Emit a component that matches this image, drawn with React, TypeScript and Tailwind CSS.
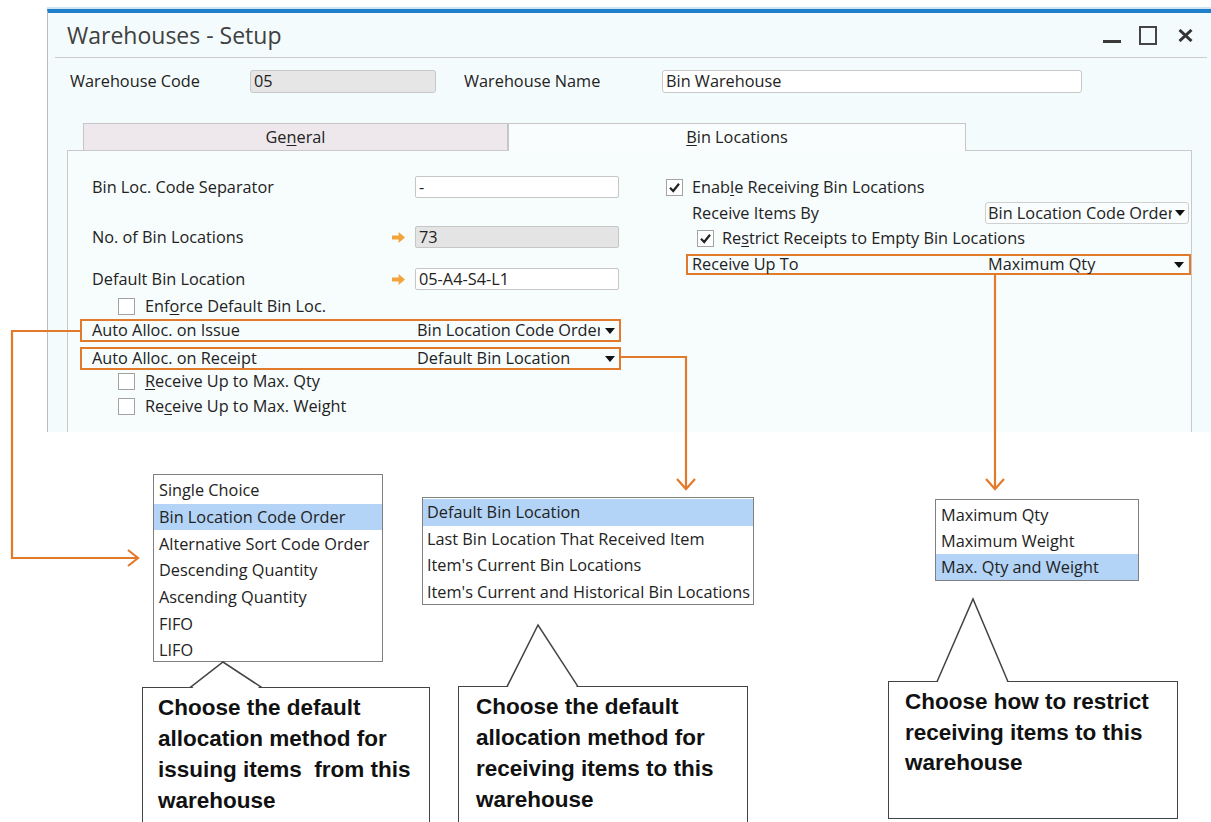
import React from "react";

const ORANGE = "#e27a2c";

function Check({ checked }: { checked?: boolean }) {
  return (
    <span className="w-[17px] h-[17px] border border-[#a3a3a3] bg-white flex items-center justify-center shrink-0">
      {checked && (
        <svg width="13" height="13" viewBox="0 0 13 13">
          <path d="M2 6.8 L5.2 10 L11 2.8" fill="none" stroke="#222" strokeWidth="2.2" />
        </svg>
      )}
    </span>
  );
}

function Arrow() {
  return (
    <svg width="13" height="11" viewBox="0 0 13 11">
      <path d="M0 3.6 H6.6 V0 L13 5.5 L6.6 11 V7.4 H0 Z" fill="#f2a43a" />
    </svg>
  );
}

function Caret() {
  return (
    <svg width="10" height="6" viewBox="0 0 10 6" className="shrink-0">
      <path d="M0 0 H10 L5 6 Z" fill="#111" />
    </svg>
  );
}

function U({ children }: { children: React.ReactNode }) {
  return <span className="underline underline-offset-2">{children}</span>;
}

export default function App() {
  return (
    <div className="relative w-[1211px] h-[822px] bg-white overflow-hidden font-['Open_Sans',sans-serif] text-[16.3px] text-[#222]">
      {/* Window */}
      <div className="pt-[7px] pl-[47px]">
        <div className="h-[2px] bg-[#cfe4f4]" />
        <div className="w-[1164px] h-[423px] border-t-4 border-t-[#1f7fc8] border-l border-l-[#bcbcbc] bg-[#f4fbfc] flex flex-col">
          {/* Title bar */}
          <div className="h-[44px] flex items-center pl-[19px] pr-[18px]">
            <span className="text-[23px] text-[#404040] leading-none">Warehouses - Setup</span>
            <div className="ml-auto flex items-center">
              <div className="w-[18px] h-[3px] bg-[#3a3a3a] mt-[12px]" />
              <div className="ml-[18px] w-[18px] h-[19px] border-2 border-[#444]" />
              <svg className="ml-[21px]" width="15" height="13" viewBox="0 0 15 13">
                <path d="M1.5 1 L13.5 12 M13.5 1 L1.5 12" stroke="#333" strokeWidth="3" />
              </svg>
            </div>
          </div>
          <div className="ml-[7px] mr-[4px] h-px bg-[#cccccc]" />

          {/* Header fields */}
          <div className="mt-[12px] h-[23px] flex items-center pl-[22px]">
            <span className="w-[180px]">Warehouse Code</span>
            <div className="w-[186px] h-[23px] border border-[#c8c8c8] rounded-[3px] bg-[#e6e6e6] flex items-center px-[3px]">05</div>
            <span className="ml-[28px] w-[198px]">Warehouse Name</span>
            <div className="w-[420px] h-[23px] border border-[#c8c8c8] rounded-[3px] bg-white flex items-center px-[3px]">Bin Warehouse</div>
          </div>

          {/* Tabs */}
          <div className="mt-[30px] ml-[35px] h-[27px] flex items-start relative z-10">
            <div className="w-[425px] h-[27px] bg-[#eee8ec] border border-b-0 border-[#c6c6c6] flex items-center justify-center">
              Ge<U>n</U>eral
            </div>
            <div className="w-[458px] h-[28px] bg-[#f9fdfd] border border-b-0 border-[#c6c6c6] flex items-center justify-center">
              <U>B</U>in Locations
            </div>
          </div>

          {/* Panel */}
          <div className="ml-[19px] w-[1125px] flex-1 border-l border-t border-r border-[#c9c9c9] bg-[#f7fcfd] flex">
            {/* Left column */}
            <div className="w-[572px] pl-[24px] pt-[25px] flex flex-col">
              <div className="flex items-center h-[22px]">
                <span className="w-[300px]">Bin Loc. Code Separator</span>
                <span className="w-[23px]" />
                <div className="w-[204px] h-[22px] border border-[#c6c6c6] rounded-[2px] bg-white flex items-center px-[3px]">-</div>
              </div>
              <div className="mt-[28px] flex items-center h-[22px]">
                <span className="w-[300px]">No. of Bin Locations</span>
                <span className="w-[23px] flex items-center"><Arrow /></span>
                <div className="w-[204px] h-[22px] border border-[#c6c6c6] rounded-[2px] bg-[#e4e4e4] flex items-center px-[3px]">73</div>
              </div>
              <div className="mt-[20px] flex items-center h-[22px]">
                <span className="w-[300px]">Default Bin Location</span>
                <span className="w-[23px] flex items-center"><Arrow /></span>
                <div className="w-[204px] h-[22px] border border-[#c6c6c6] rounded-[2px] bg-white flex items-center px-[3px]">05-A4-S4-L1</div>
              </div>
              <div className="mt-[8px] h-[17px] flex items-center pl-[26px]">
                <Check />
                <span className="ml-[10px]">Enf<U>o</U>rce Default Bin Loc.</span>
              </div>
              <div className="mt-[4px] -ml-[12px] w-[541px] h-[23px] border-2 border-[#e27a2c] flex items-center pl-[10px]">
                <span className="w-[323px]">Auto Alloc. on Issue</span>
                <div className="w-[204px] flex items-center justify-between pl-[2px] pr-[4px]">
                  <span className="w-[183px] whitespace-nowrap overflow-hidden">Bin Location Code Order</span>
                  <Caret />
                </div>
              </div>
              <div className="mt-[5px] -ml-[12px] w-[541px] h-[23px] border-2 border-[#e27a2c] flex items-center pl-[10px]">
                <span className="w-[323px]">Auto Alloc. on Receipt</span>
                <div className="w-[204px] flex items-center justify-between pl-[2px] pr-[4px]">
                  <span className="w-[183px] whitespace-nowrap overflow-hidden">Default Bin Location</span>
                  <Caret />
                </div>
              </div>
              <div className="mt-[3px] h-[17px] flex items-center pl-[26px]">
                <Check />
                <span className="ml-[10px]"><U>R</U>eceive Up to Max. Qty</span>
              </div>
              <div className="mt-[8px] h-[17px] flex items-center pl-[26px]">
                <Check />
                <span className="ml-[10px]">Re<U>c</U>eive Up to Max. Weight</span>
              </div>
            </div>

            {/* Right column */}
            <div className="flex-1 pt-[28px] flex flex-col">
              <div className="h-[17px] flex items-center pl-[26px]">
                <Check checked />
                <span className="ml-[9px]">Enab<U>l</U>e Receiving Bin Locations</span>
              </div>
              <div className="mt-[6px] h-[22px] flex items-center pl-[52px]">
                <span className="w-[293px]">Receive Items By</span>
                <div className="w-[204px] h-[22px] border border-[#cfcfcf] rounded-[3px] bg-[#fafdfd] flex items-center justify-between pl-[2px] pr-[3px]">
                  <span className="w-[184px] whitespace-nowrap overflow-hidden">Bin Location Code Order</span>
                  <Caret />
                </div>
              </div>
              <div className="mt-[6px] h-[17px] flex items-center pl-[57px]">
                <Check checked />
                <span className="ml-[8px]">Re<U>s</U>trict Receipts to Empty Bin Locations</span>
              </div>
              <div className="mt-[7px] ml-[46px] w-[505px] h-[21px] border-2 border-[#e27a2c] flex items-center pl-[4px]">
                <span className="w-[294px]">Receive Up To</span>
                <div className="w-[199px] flex items-center justify-between pl-[2px] pr-[1px]">
                  <span>Maximum Qty</span>
                  <Caret />
                </div>
              </div>
            </div>
          </div>
        </div>
      </div>

      {/* Dropdown lists (diagram) */}
      <div className="absolute left-[153px] top-[474px] w-[230px] h-[188px] border-[1.5px] border-[#808080] bg-white pt-[2px]">
        <div className="h-[26.7px] flex items-center pl-[5px]">Single Choice</div>
        <div className="h-[26.7px] flex items-center pl-[5px] bg-[#b3d4f6]">Bin Location Code Order</div>
        <div className="h-[26.7px] flex items-center pl-[5px]">Alternative Sort Code Order</div>
        <div className="h-[26.7px] flex items-center pl-[5px]">Descending Quantity</div>
        <div className="h-[26.7px] flex items-center pl-[5px]">Ascending Quantity</div>
        <div className="h-[26.7px] flex items-center pl-[5px]">FIFO</div>
        <div className="h-[26.7px] flex items-center pl-[5px]">LIFO</div>
      </div>

      <div className="absolute left-[422px] top-[497px] w-[332px] h-[108px] border-[1.5px] border-[#808080] bg-white pt-[1px]">
        <div className="h-[26.5px] flex items-center pl-[4px] bg-[#b3d4f6]">Default Bin Location</div>
        <div className="h-[26.5px] flex items-center pl-[4px]">Last Bin Location That Received Item</div>
        <div className="h-[26.5px] flex items-center pl-[4px]">Item's Current Bin Locations</div>
        <div className="h-[26.5px] flex items-center pl-[4px] whitespace-nowrap overflow-hidden">Item's Current and Historical Bin Locations</div>
      </div>

      <div className="absolute left-[935px] top-[499px] w-[204px] h-[82px] border-[1.5px] border-[#808080] bg-white pt-[2px]">
        <div className="h-[26px] flex items-center pl-[5px]">Maximum Qty</div>
        <div className="h-[26px] flex items-center pl-[5px]">Maximum Weight</div>
        <div className="h-[26px] flex items-center pl-[5px] bg-[#b3d4f6]">Max. Qty and Weight</div>
      </div>

      {/* Callouts */}
      <div className="absolute left-[142px] top-[687px] w-[288px] h-[150px] border-[1.5px] border-[#444] bg-white pl-[15px] pt-[4px] font-['Liberation_Sans',Arial,sans-serif] font-bold text-[22.5px] leading-[31px] text-[#111] whitespace-pre">
        <div>Choose the default</div>
        <div>allocation method for</div>
        <div>issuing items  from this</div>
        <div>warehouse</div>
      </div>
      <div className="absolute left-[458px] top-[686px] w-[290px] h-[150px] border-[1.5px] border-[#444] bg-white pl-[17px] pt-[4px] font-['Liberation_Sans',Arial,sans-serif] font-bold text-[22.5px] leading-[31px] text-[#111] whitespace-pre">
        <div>Choose the default</div>
        <div>allocation method for</div>
        <div>receiving items to this</div>
        <div>warehouse</div>
      </div>
      <div className="absolute left-[888px] top-[681px] w-[290px] h-[138px] border-[1.5px] border-[#444] bg-white pl-[16px] pt-[5px] font-['Liberation_Sans',Arial,sans-serif] font-bold text-[22.5px] leading-[30.5px] text-[#111] whitespace-pre">
        <div>Choose how to restrict</div>
        <div>receiving items to this</div>
        <div>warehouse</div>
      </div>

      {/* Connectors and callout pointers */}
      <svg className="absolute left-0 top-0 pointer-events-none" width="1211" height="822" viewBox="0 0 1211 822">
        <g fill="none" stroke={ORANGE} strokeWidth="2.2">
          <path d="M80 331 H12 V558 H137" />
          <path d="M128 550 L138 558 L128 566" />
          <path d="M621 357 H686 V488" />
          <path d="M677 479 L686 489 L695 479" />
          <path d="M995 275 V488" />
          <path d="M986 479 L995 489 L1004 479" />
        </g>
        <polygon points="190,690 223,662 262,690" fill="white" />
        <polyline points="190,687.7 223,662 262,687.7" fill="none" stroke="#444" strokeWidth="1.5" />
        <polygon points="507,689 538,625 578,689" fill="white" />
        <polyline points="507,686.7 538,625 578,686.7" fill="none" stroke="#444" strokeWidth="1.5" />
        <polygon points="937,684 973,599 1008,684" fill="white" />
        <polyline points="937,681.7 973,599 1008,681.7" fill="none" stroke="#444" strokeWidth="1.5" />
      </svg>
    </div>
  );
}
